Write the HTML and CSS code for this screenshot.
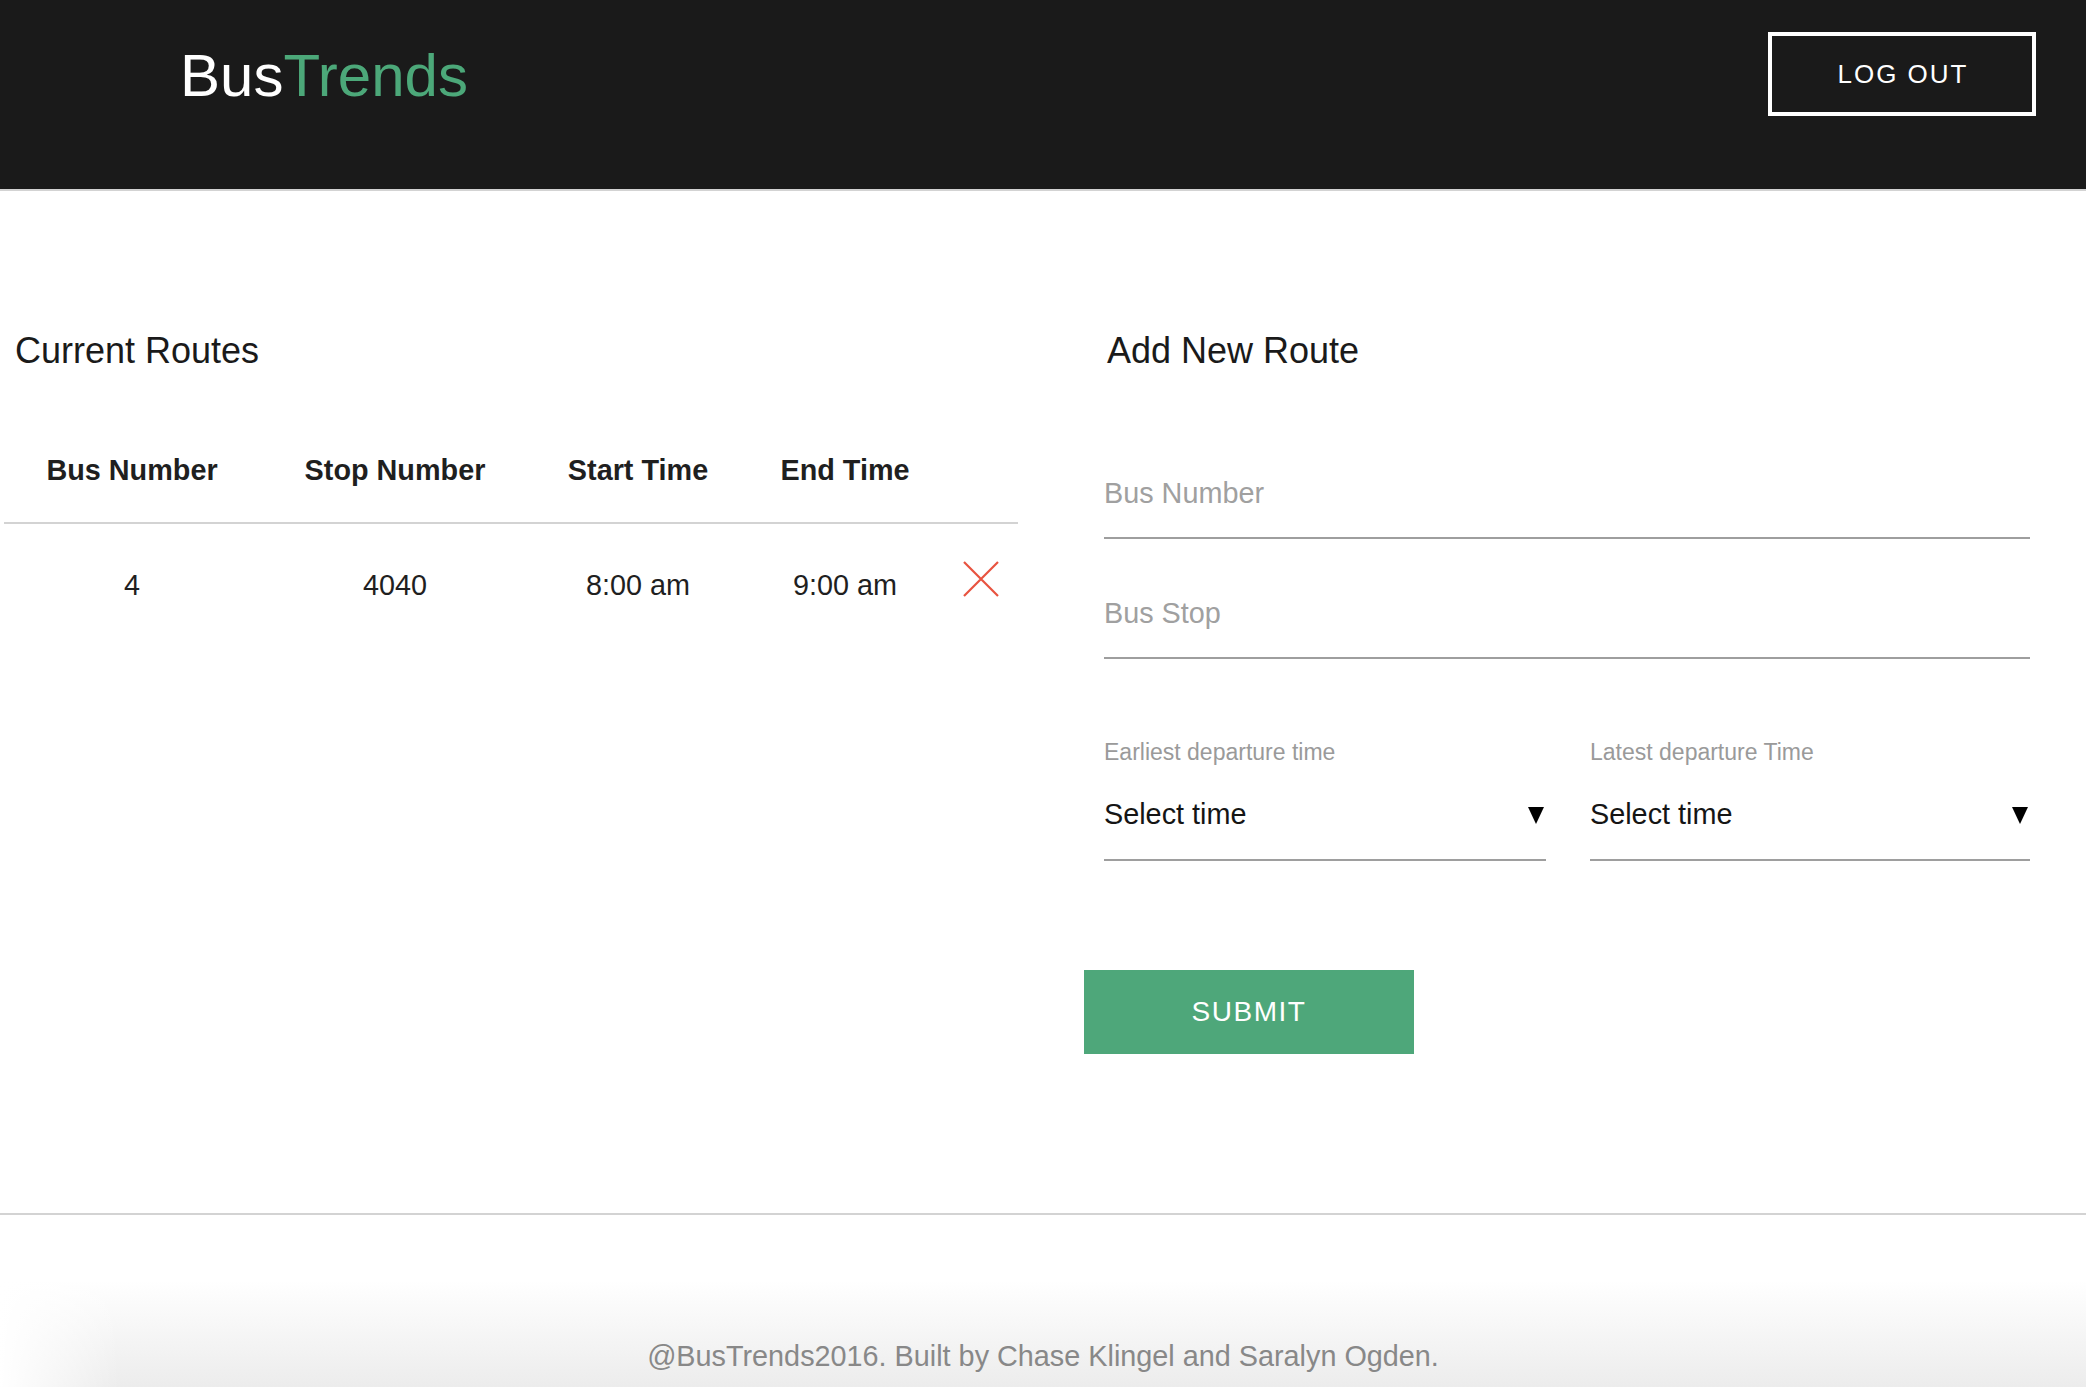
FILE: index.html
```html
<!DOCTYPE html>
<html lang="en">
<head>
<meta charset="utf-8">
<title>BusTrends</title>
<link rel="stylesheet" href="styles.css">
</head>
<body>
<header class="topbar">
  <div class="logo"><span class="logo-bus">Bus</span><span class="logo-trends">Trends</span></div>
  <button class="logout" type="button">LOG OUT</button>
</header>
<main class="content">
  <section class="routes">
    <h2 class="section-title routes-title">Current Routes</h2>
    <table class="routes-table">
      <colgroup>
        <col class="c1"><col class="c2"><col class="c3"><col class="c4"><col class="c5">
      </colgroup>
      <thead>
        <tr><th>Bus Number</th><th>Stop Number</th><th>Start Time</th><th>End Time</th><th></th></tr>
      </thead>
      <tbody>
        <tr>
          <td>4</td><td>4040</td><td>8:00 am</td><td>9:00 am</td>
          <td class="remove"><svg class="remove-icon" width="36" height="36" viewBox="0 0 36 36"><path d="M1 1 L35 35 M35 1 L1 35" stroke="#e8533f" stroke-width="2.2" fill="none"/></svg></td>
        </tr>
      </tbody>
    </table>
  </section>
  <section class="add-route">
    <h2 class="section-title add-title">Add New Route</h2>
    <form class="route-form">
      <div class="fields">
        <input class="text-field" type="text" placeholder="Bus Number">
        <input class="text-field second" type="text" placeholder="Bus Stop">
        <div class="time-row">
          <div class="time-field">
            <label class="time-label">Earliest departure time</label>
            <div class="select"><span>Select time</span><svg class="caret" width="16" height="17" viewBox="0 0 16 17"><polygon points="0,0 16,0 8,17" fill="#000"/></svg></div>
          </div>
          <div class="time-field">
            <label class="time-label">Latest departure Time</label>
            <div class="select"><span>Select time</span><svg class="caret" width="16" height="17" viewBox="0 0 16 17"><polygon points="0,0 16,0 8,17" fill="#000"/></svg></div>
          </div>
        </div>
      </div>
      <button class="submit" type="button">SUBMIT</button>
    </form>
  </section>
</main>
<footer class="footer">@BusTrends2016. Built by Chase Klingel and Saralyn Ogden.</footer>
</body>
</html>
```
FILE: styles.css
```css
* { box-sizing: border-box; }
html, body { margin: 0; padding: 0; }
body {
  font-family: "Liberation Sans", Arial, Helvetica, sans-serif;
  color: #1f1f1f;
  background: #fff;
  width: 2086px;
}

.topbar {
  height: 191px;
  background: #1a1a1a;
  border-bottom: 2px solid #d3d3d3;
  display: flex;
  justify-content: space-between;
  align-items: flex-start;
  padding: 32px 50px 0 180px;
}
.logo {
  margin-top: 14px;
  font-size: 60px;
  line-height: 60px;
}
.logo-bus { color: #ffffff; }
.logo-trends { color: #4ca879; }

.logout {
  width: 268px;
  height: 84px;
  background: transparent;
  border: 4px solid #ffffff;
  color: #ffffff;
  font-family: inherit;
  font-size: 26px;
  letter-spacing: 2px;
  padding: 0 0 0 2px;
  cursor: pointer;
}

.content {
  display: flex;
  padding: 142px 0 159px 4px;
  gap: 66px;
}
.routes { width: 1014px; flex: none; }
.add-route { flex: 1; }

.section-title {
  margin: 0;
  font-size: 36px;
  line-height: 36px;
  font-weight: normal;
  color: #1a1a1a;
}
.routes-title { margin-left: 11px; }
.add-title { margin-left: 23px; }

.routes-table {
  margin-top: 44px;
  width: 1014px;
  table-layout: fixed;
  border-collapse: separate;
  border-spacing: 0;
}
.c1 { width: 256px; }
.c2 { width: 270px; }
.c3 { width: 216px; }
.c4 { width: 198px; }
.c5 { width: 74px; }

.routes-table th {
  font-size: 28.8px;
  line-height: 34px;
  font-weight: bold;
  color: #1f1f1f;
  text-align: center;
  padding: 40px 0 35px;
  border-bottom: 2px solid #d3d3d3;
}
.routes-table td {
  font-size: 28.8px;
  line-height: 34px;
  color: #1f1f1f;
  text-align: center;
  vertical-align: top;
  padding: 44px 0 20px;
}
.routes-table td.remove {
  text-align: left;
  padding: 37px 0 0 19px;
}
.remove-icon { display: block; }

.fields {
  margin: 80px 56px 0 20px;
}
.text-field {
  display: block;
  width: 100%;
  height: 90px;
  padding: 0;
  margin: 0;
  border: none;
  border-bottom: 2px solid #9e9e9e;
  outline: none;
  background: transparent;
  font-family: inherit;
  font-size: 28.8px;
  color: #1f1f1f;
}
.text-field.second { margin-top: 30px; }
.text-field::placeholder { color: #a0a0a0; opacity: 1; }

.time-row {
  margin-top: 79px;
  display: grid;
  grid-template-columns: 442px 440px;
  column-gap: 44px;
}
.time-label {
  display: block;
  font-size: 23px;
  line-height: 28px;
  color: #9a9a9a;
  margin-bottom: 31px;
}
.select {
  display: flex;
  justify-content: space-between;
  align-items: flex-start;
  font-size: 28.8px;
  line-height: 34px;
  color: #151515;
  padding-bottom: 28px;
  border-bottom: 2px solid #9e9e9e;
}
.caret {
  display: block;
  margin-top: 10px;
  margin-right: 2px;
}

.submit {
  display: block;
  margin-top: 109px;
  width: 330px;
  height: 84px;
  background: #4ea77a;
  border: none;
  color: #ffffff;
  font-family: inherit;
  font-size: 28px;
  letter-spacing: 1.5px;
  padding: 0;
  cursor: pointer;
}

.footer {
  border-top: 2px solid #d3d3d3;
  padding: 124px 0 14px;
  text-align: center;
  font-size: 28.8px;
  line-height: 34px;
  color: #888888;
  background:
    linear-gradient(to right, #ffffff 0, rgba(255,255,255,0) 120px),
    linear-gradient(to bottom, #ffffff 0, #ffffff 38%, #ececec 100%);
}
```
